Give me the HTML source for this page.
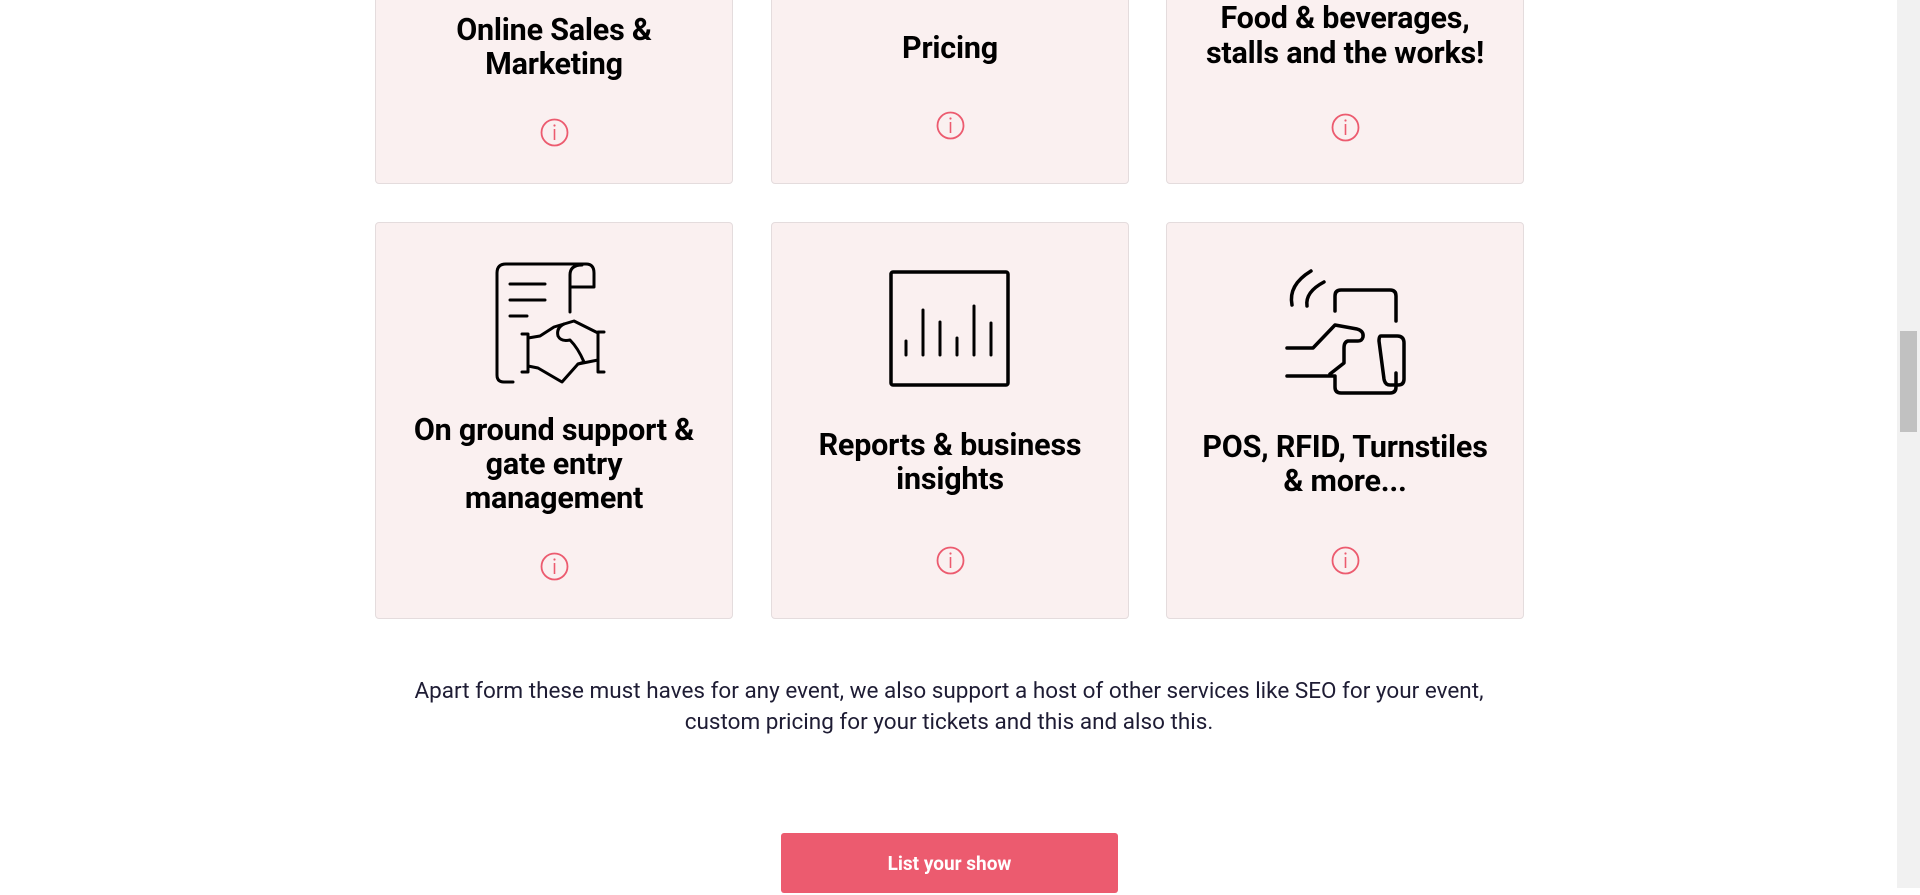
<!DOCTYPE html>
<html><head><meta charset="utf-8"><style>
html,body{margin:0;padding:0;width:1920px;height:888px;overflow:hidden;background:#fff;font-family:"Roboto","Liberation Sans",sans-serif;}
.card{position:absolute;background:#faf0f0;border:1px solid #e4dcdd;border-radius:4px;box-sizing:border-box;}
.t{position:absolute;left:0;right:0;text-align:center;font-weight:bold;font-size:30.5px;line-height:34px;color:#000;letter-spacing:-0.2px;}
.info{position:absolute;width:29px;height:29px;margin-left:-14.5px;margin-top:-14.5px;}
.ic{position:absolute;}
p{position:absolute;left:0;width:1898px;top:676px;margin:0;text-align:center;font-size:22.5px;line-height:31px;color:#1e1c34;}
.btn{position:absolute;left:781px;top:833px;width:337px;height:60px;background:#ec5b6f;border-radius:3px;color:#fff;font-weight:bold;font-size:19px;text-align:center;line-height:62px;}
.sb{position:absolute;left:1897px;top:0;width:23px;height:888px;background:#f1f1f1;}
.th{position:absolute;left:1900px;top:331px;width:17px;height:101px;background:#c1c1c1;}
</style></head><body>
<svg width="0" height="0" style="position:absolute"><defs>
<g id="i"><circle cx="14.5" cy="14.5" r="13" fill="none" stroke="#ec5b6f" stroke-width="1.8"/><line x1="14.5" y1="11" x2="14.5" y2="22" stroke="#ec5b6f" stroke-width="1.6"/><circle cx="14.5" cy="7.5" r="1.1" fill="#ec5b6f"/></g>
</defs></svg>

<div class="card" style="left:375px;top:-10px;width:358px;height:194px"></div>
<div class="card" style="left:771px;top:-10px;width:358px;height:194px"></div>
<div class="card" style="left:1166px;top:-10px;width:358px;height:194px"></div>
<div class="t" style="left:375px;width:358px;top:14px">Online Sales &amp;<br>Marketing</div>
<div class="t" style="left:771px;width:358px;top:32px">Pricing</div>
<div class="t" style="left:1166px;width:358px;top:1px;line-height:35px">Food &amp; beverages,<br>stalls and the works!</div>
<svg class="info" style="left:554px;top:132px"><use href="#i"/></svg>
<svg class="info" style="left:950px;top:125px"><use href="#i"/></svg>
<svg class="info" style="left:1345px;top:127px"><use href="#i"/></svg>

<div class="card" style="left:375px;top:222px;width:358px;height:397px"></div>
<div class="card" style="left:771px;top:222px;width:358px;height:397px"></div>
<div class="card" style="left:1166px;top:222px;width:358px;height:397px"></div>

<svg class="ic" style="left:494px;top:262px" width="122" height="124" viewBox="0 0 122 124" fill="none" stroke="#000" stroke-width="3" stroke-linecap="round" stroke-linejoin="round">
<path d="M19 120 h-9 q-7 0 -7 -7 v-102 q0 -9 9 -9 h80 q8 0 8 9 v14 h-24"/>
<path d="M88 3 q-12 0 -12 10 v37"/>
<path d="M16 22 h35 M16 38 h35 M16 54 h17"/>
<path d="M28 72 h6 v38 h-6 M110 70 h-6 v40 h6"/>
<path d="M34 104 l10 2 l24 14 l16 -18 l20 -4"/>
<path d="M34 76 l12 -2 l14 -9 l20 -6 l24 12"/>
<path d="M70 62 q-8 4 -6 12 q3 6 12 4 q8 8 14 22 l-6 2"/>
</svg>

<svg class="ic" style="left:889px;top:270px" width="122" height="118" viewBox="0 0 122 118" fill="none" stroke="#000" stroke-width="3" stroke-linecap="round">
<rect x="2" y="2" width="117" height="113" rx="2" stroke-width="3.5"/>
<path d="M17 85 v-14 M34 85 v-45 M51 85 v-33 M68 85 v-17 M85 85 v-49 M102 85 v-32"/>
</svg>

<svg class="ic" style="left:1284px;top:266px" width="124" height="132" viewBox="0 0 124 132" fill="none" stroke="#000" stroke-width="3.5" stroke-linecap="round" stroke-linejoin="round">
<path d="M8 39 q-4 -20 19 -34 M23 40 q-2 -14 17 -24"/>
<path d="M51 45 v-15 q0 -6 6 -6 h49 q6 0 6 6 v25"/>
<path d="M3 110 h48 v11 q0 6 6 6 h49 q6 0 6 -6 v-14"/>
<path d="M3 82 h26 l22 -23 l22 4 q7 2 6 8 q-1 4 -5 4 h-10 q-4 1 -4 7 v15 l-14 11"/>
<path d="M97 70 h16 q7 0 7 7 v36 q0 6 -6 6 h-8 q-5 0 -6 -6 l-5 -38 q0 -5 2 -5z"/>
</svg>

<div class="t" style="left:375px;width:358px;top:414px">On ground support &amp;<br>gate entry<br>management</div>
<div class="t" style="left:771px;width:358px;top:429px">Reports &amp; business<br>insights</div>
<div class="t" style="left:1166px;width:358px;top:431px">POS, RFID, Turnstiles<br>&amp; more...</div>
<svg class="info" style="left:554px;top:566px"><use href="#i"/></svg>
<svg class="info" style="left:950px;top:560px"><use href="#i"/></svg>
<svg class="info" style="left:1345px;top:560px"><use href="#i"/></svg>

<p>Apart form these must haves for any event, we also support a host of other services like SEO for your event,<br>custom pricing for your tickets and this and also this.</p>
<div class="btn">List your show</div>
<div class="sb"></div><div class="th"></div>
</body></html>
